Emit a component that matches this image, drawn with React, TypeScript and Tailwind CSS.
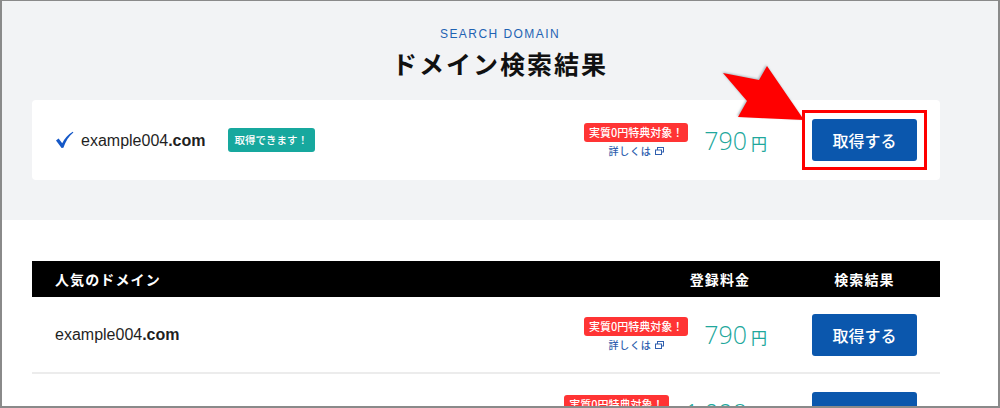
import { useState } from 'react';

type Row = { name: string; tld: string; price: string };

const ROWS: Row[] = [
  { name: 'example004', tld: '.com', price: '790' },
  { name: 'example004', tld: '.net', price: '1,098' },
];

const JP = { fontFamily: '"Noto Sans CJK JP", "Liberation Sans", sans-serif' };

function CheckMark() {
  return (
    <svg width="19" height="18" viewBox="0 0 19 18" className="shrink-0">
      <path d="M1 9.5 L3.6 7.6 L7.2 12.2 C9.6 7.6 13 3.4 17.8 0.8 L18.4 1.6 C13.8 5.2 10.6 10.4 8.4 16.8 L6.6 17 Z" fill="#1558c7" />
    </svg>
  );
}

function WindowIcon() {
  return (
    <svg width="9" height="8" viewBox="0 0 9 8" className="ml-[3px]">
      <rect x="2.5" y="0.5" width="6" height="4.5" fill="none" stroke="#2f5fae" strokeWidth="1" />
      <rect x="0.5" y="3" width="6" height="4.5" fill="white" stroke="#2f5fae" strokeWidth="1" />
    </svg>
  );
}

function Promo() {
  return (
    <div className="flex flex-col items-center">
      <span className="rounded-[3px] bg-[#ff3434] px-[5px] h-[19px] leading-[19px] text-[11px] font-medium text-white whitespace-nowrap">
        実質0円特典対象！
      </span>
      <span className="mt-[2px] flex items-center text-[10px] leading-[14px] font-medium text-[#2f5fae] tracking-[0.08em]">
        詳しくは
        <WindowIcon />
      </span>
    </div>
  );
}

function Price({ value }: { value: string }) {
  return (
    <div className="flex items-baseline text-[#21a79c]">
      <span className="text-[25px] leading-none" style={{ fontFamily: '"Open Sans", sans-serif', fontWeight: 300 }}>
        {value}
      </span>
      <span className="ml-[4px] text-[16px] leading-none" style={JP}>
        円
      </span>
    </div>
  );
}

function BuyButton({ onClick }: { onClick?: () => void }) {
  return (
    <button
      onClick={onClick}
      className="w-[105px] h-[42px] rounded-[3px] bg-[#0b57ad] text-white text-[16px] font-medium"
      style={JP}
    >
      取得する
    </button>
  );
}

function Domain({ name, tld }: { name: string; tld: string }) {
  return (
    <span className="text-[16px] text-[#1f1f1f]" style={{ fontFamily: '"Liberation Sans", sans-serif' }}>
      {name}
      <span className="font-bold">{tld}</span>
    </span>
  );
}

export default function App() {
  const [picked, setPicked] = useState<string[]>([]);

  const pick = (d: string) => setPicked((prev) => (prev.includes(d) ? prev : [...prev, d]));

  return (
    <div
      className="relative h-[408px] w-[1000px] overflow-hidden border-t border-x-2 border-b-2 border-[#8a8a8a] bg-white"
      style={JP}
    >
      {/* Search result hero */}
      <div className="h-[219px] bg-[#f2f3f5] pt-[25px]">
        <p
          className="text-center text-[12px] leading-[16px] tracking-[0.12em] text-[#1f63b3]"
          style={{ fontFamily: '"Liberation Sans", sans-serif' }}
        >
          SEARCH DOMAIN
        </p>
        <h1 className="mt-[3px] text-center text-[25px] leading-[36px] font-bold tracking-[0.08em] text-[#111]">
          ドメイン検索結果
        </h1>

        <div className="mt-[19px] ml-[30px] flex h-[80px] w-[908px] items-center rounded-[4px] bg-white pl-[23px] pr-[23px]">
          <CheckMark />
          <span className="ml-[7px]">
            <Domain name="example004" tld=".com" />
          </span>
          <span className="ml-[22px] rounded-[3px] bg-[#17a89e] px-[7px] h-[24px] leading-[24px] text-[10.5px] font-medium text-white">
            取得できます！
          </span>
          <div className="ml-auto flex items-center">
            <Promo />
            <div className="ml-[16px]">
              <Price value="790" />
            </div>
            <div className="relative ml-[45px]">
              <div className="absolute -left-[10px] -right-[10px] -top-[9px] -bottom-[9px] border-[3px] border-[#ff0000]" />
              <BuyButton onClick={() => pick('example004.com')} />
            </div>
          </div>
        </div>
      </div>

      {/* Popular domains table */}
      <div className="ml-[30px] mt-[41px] w-[908px]">
        <div className="flex h-[36px] items-center bg-black pl-[23px] pr-[23px] text-white text-[14px] font-bold tracking-[0.08em]">
          <span>人気のドメイン</span>
          <span className="ml-auto w-[120px] text-center">登録料金</span>
          <span className="ml-[32px] w-[105px] text-center">検索結果</span>
        </div>

        {ROWS.map((row, i) => (
          <div
            key={row.name + row.tld}
            className={`flex h-[77px] items-center pl-[23px] pr-[23px] ${i === 0 ? 'border-b-2 border-[#ececec]' : ''}`}
          >
            <Domain name={row.name} tld={row.tld} />
            <div className="ml-auto flex items-center">
              <Promo />
              <div className="ml-[16px]">
                <Price value={row.price} />
              </div>
              <div className="ml-[45px]">
                <BuyButton onClick={() => pick(row.name + row.tld)} />
              </div>
            </div>
          </div>
        ))}
      </div>

      {/* Pointer arrow */}
      <svg
        className="absolute left-[712px] top-[60px]"
        width="100"
        height="66"
        viewBox="712 60 100 66"
        style={{ filter: 'drop-shadow(-1px -1px 1px rgba(110,130,140,0.55))' }}
      >
        <polygon points="721,72 757,79 765,65 802,119 736,116 745,100" fill="#ff0000" />
      </svg>

      {picked.length > 0 && <span className="sr-only">{picked.join(',')}</span>}
    </div>
  );
}
